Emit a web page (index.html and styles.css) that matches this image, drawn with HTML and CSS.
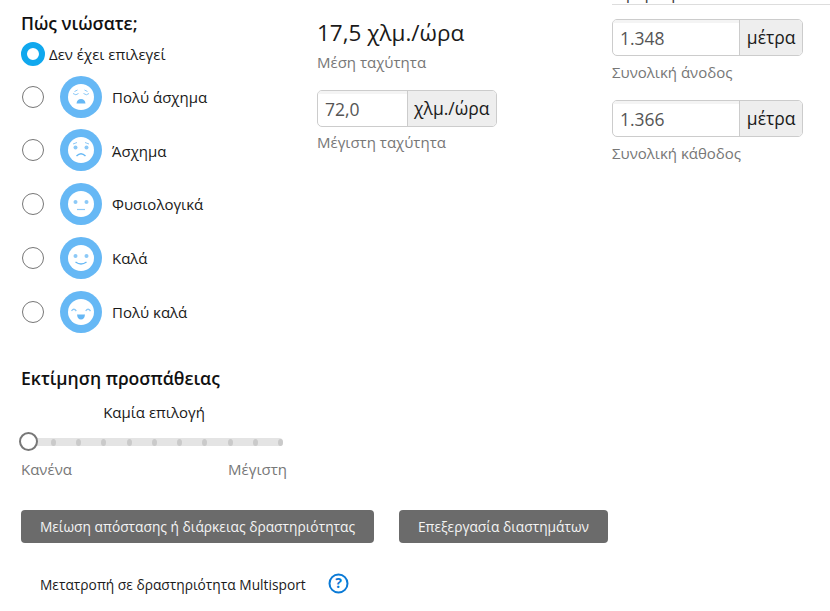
FILE: index.html
```html
<!DOCTYPE html>
<html lang="el">
<head>
<meta charset="utf-8">
<title>Δραστηριότητα</title>
<link rel="stylesheet" href="styles.css">
</head>
<body>
<main class="page">
  <section class="col-feel">
    <h2 class="heading">Πώς νιώσατε;</h2>
    <div class="none-row"><span class="radio radio-on"></span><span>Δεν έχει επιλεγεί</span></div>
    <div class="feel-row"><span class="radio"></span>
      <svg class="face" viewBox="0 0 42 42"><circle cx="21" cy="21" r="21" fill="#66b8f5"/><circle cx="21" cy="21" r="13" fill="#fff"/><path d="M13 17.500q3 2.500 5.500 0M23.500 17.500q3 2.500 5.500 0M14.500 15.500l3-1.500M27.500 15.500l-3-1.500" fill="none" stroke="#8cc9f7" stroke-width="1"/><path d="M16.500 27.500q.5-4.500 4.500-4.500t4.500 4.500z" fill="#66b8f5"/></svg>
      <span>Πολύ άσχημα</span></div>
    <div class="feel-row row-b"><span class="radio"></span>
      <svg class="face" viewBox="0 0 42 42"><circle cx="21" cy="21" r="21" fill="#66b8f5"/><circle cx="21" cy="21" r="13" fill="#fff"/><circle cx="15.500" cy="18.500" r="2" fill="#8cc9f7"/><circle cx="26.500" cy="18.500" r="2" fill="#8cc9f7"/><path d="M13 15l4-1.500M29 15l-4-1.500" fill="none" stroke="#8cc9f7" stroke-width="1"/><path d="M16.500 27q4.500-4.500 9 0" fill="none" stroke="#66b8f5" stroke-width="1.400"/></svg>
      <span class="label-low">Άσχημα</span></div>
    <div class="feel-row"><span class="radio"></span>
      <svg class="face" viewBox="0 0 42 42"><circle cx="21" cy="21" r="21" fill="#66b8f5"/><circle cx="21" cy="21" r="13" fill="#fff"/><circle cx="15.500" cy="19" r="2" fill="#8cc9f7"/><circle cx="26.500" cy="19" r="2" fill="#8cc9f7"/><path d="M17 26.500h8" stroke="#8cc9f7" stroke-width="1.200"/></svg>
      <span>Φυσιολογικά</span></div>
    <div class="feel-row"><span class="radio"></span>
      <svg class="face" viewBox="0 0 42 42"><circle cx="21" cy="21" r="21" fill="#66b8f5"/><circle cx="21" cy="21" r="13" fill="#fff"/><circle cx="15.500" cy="19" r="2" fill="#8cc9f7"/><circle cx="26.500" cy="19" r="2" fill="#8cc9f7"/><path d="M15.500 25q5.500 4 11 0" fill="none" stroke="#66b8f5" stroke-width="1.400"/></svg>
      <span>Καλά</span></div>
    <div class="feel-row"><span class="radio"></span>
      <svg class="face" viewBox="0 0 42 42"><circle cx="21" cy="21" r="21" fill="#66b8f5"/><circle cx="21" cy="21" r="13" fill="#fff"/><path d="M11.500 20q2.300-3.500 4.800 0M25.700 20q2.300-3.500 4.800 0" fill="none" stroke="#8cc9f7" stroke-width="1.300"/><path d="M17 23.500h8q-.5 5-4 5t-4-5z" fill="#66b8f5"/></svg>
      <span>Πολύ καλά</span></div>

    <h2 class="heading heading-effort">Εκτίμηση προσπάθειας</h2>
    <div class="effort-value">Καμία επιλογή</div>
    <div class="slider">
      <span class="tick"></span><span class="tick"></span><span class="tick"></span><span class="tick"></span><span class="tick"></span><span class="tick"></span><span class="tick"></span><span class="tick"></span><span class="tick"></span><span class="tick"></span>
      <span class="thumb"></span>
    </div>
    <div class="slider-labels"><span>Κανένα</span><span>Μέγιστη</span></div>
  </section>

  <section class="col-speed">
    <div class="big-value">17,5 χλμ./ώρα</div>
    <div class="caption">Μέση ταχύτητα</div>
    <div class="field field-speed"><span class="field-input">72,0</span><span class="field-unit">χλμ./ώρα</span></div>
    <div class="caption">Μέγιστη ταχύτητα</div>
  </section>

  <section class="col-elev">
    <div class="elev-title"><span class="elev-title-text">Υψομετρικά</span></div>
    <div class="top-rule"></div>
    <div class="field"><span class="field-input">1.348</span><span class="field-unit">μέτρα</span></div>
    <div class="caption">Συνολική άνοδος</div>
    <div class="field field-next"><span class="field-input">1.366</span><span class="field-unit">μέτρα</span></div>
    <div class="caption">Συνολική κάθοδος</div>
  </section>

  <div class="actions">
    <button class="btn btn-reduce">Μείωση απόστασης ή διάρκειας δραστηριότητας</button>
    <button class="btn btn-laps">Επεξεργασία διαστημάτων</button>
  </div>
  <div class="multisport">
    <span>Μετατροπή σε δραστηριότητα Multisport</span>
    <svg class="help" viewBox="0 0 21 21"><circle cx="10.500" cy="10.500" r="9" fill="none" stroke="#0a7ad6" stroke-width="2"/><text x="10.500" y="15" text-anchor="middle" class="help-mark">?</text></svg>
  </div>
</main>
</body>
</html>
```

FILE: styles.css
```css
* { box-sizing: border-box; }
html, body { margin: 0; height: 100%; overflow: hidden; background: #fff; }
body { font-family: "Open Sans", "Noto Sans", sans-serif; font-size: 15px; color: #1a1a1a; }
.page { display: grid; grid-template-columns: 317px 295px 218px; grid-template-rows: 510px auto auto; width: 830px; height: 611px; overflow: hidden; }
.col-feel { padding-left: 21px; padding-top: 11px; }
.heading { margin: 0; font-size: 17.600px; line-height: 24px; font-weight: 600; color: #111; }
.none-row { display: flex; align-items: center; gap: 4px; height: 24px; margin-top: 7px; font-size: 15px; }
.radio { width: 22px; height: 22px; flex: none; margin-left: 1px; border-radius: 50%; border: 1px solid #777; background: #fff; }
.radio-on { width: 24px; height: 24px; margin-left: 0; border: 6.500px solid #10a8ee; }
.feel-row { display: flex; align-items: center; height: 42px; margin-top: 12px; font-size: 15px; }
.row-b { margin-top: 11px; }
.label-low { margin-top: 2px; }
.face { width: 42px; height: 42px; margin-left: 16px; margin-right: 10px; flex: none; }
.none-row + .feel-row { margin-top: 10px; }
.heading-effort { margin-top: 33px; }
.effort-value { width: 266px; text-align: center; margin-top: 12px; line-height: 20px; }
.slider { position: relative; display: flex; justify-content: space-between; align-items: center; width: 262px; height: 8px; margin: 16px 0 0 0; padding: 0 0 0 30px; background: #e4e4e4; border-radius: 4px; }
.tick { width: 5px; height: 7px; border-radius: 50%; background: #cacaca; }
.thumb { position: absolute; left: -2px; top: -6px; width: 19px; height: 19px; border-radius: 50%; border: 2.500px solid #777; background: #fff; }
.slider-labels { display: flex; justify-content: space-between; width: 266px; margin-top: 13px; line-height: 20px; color: #777; }
.big-value { font-size: 22.500px; line-height: 32px; margin-top: 17px; color: #1a1a1a; }
.caption { font-size: 15px; line-height: 20px; color: #777; margin-top: 5px; }
.big-value + .caption { margin-top: 3px; }
.field { display: flex; height: 37px; width: 180px; border: 1px solid #ccc; border-radius: 5px; overflow: hidden; font-size: 17.500px; }
.field-speed { margin-top: 18px; margin-bottom: 5px; }
.field-input { flex: 1; padding-left: 7px; line-height: 36px; color: #555; box-shadow: inset 0 3px 0 #f4f4f4; }
.field-unit { padding: 0 6.500px; line-height: 34px; background: #eee; border-left: 1px solid #ccc; color: #1a1a1a; }
.col-elev .field { width: 191px; }
.elev-title { height: 4px; overflow: hidden; font-size: 17px; color: #444; }
.elev-title-text { display: block; margin-top: -16px; line-height: 17px; }
.top-rule { height: 1px; background: #ddd; margin-bottom: 14px; }
.col-elev .caption { margin-top: 6px; }
.col-elev .field-next { margin-top: 18px; }
.actions { grid-column: 1 / 4; display: flex; padding-left: 21px; gap: 26px; }
.btn { height: 33px; border: 0; border-radius: 4px; background: #6b6b6b; color: #f4f4f4; font: 13.750px "Open Sans", "Noto Sans", sans-serif; padding: 0; }
.btn-reduce { width: 353px; }
.btn-laps { width: 209px; margin-left: -1px; }
.multisport { grid-column: 1 / 4; display: flex; align-items: center; padding-left: 40px; margin-top: 15px; font-size: 13.750px; height: 22px; }
.help { width: 21px; height: 21px; margin-left: 22px; margin-top: -2px; }
.help-mark { font: 700 14px "Open Sans", sans-serif; fill: #0a7ad6; }
```
